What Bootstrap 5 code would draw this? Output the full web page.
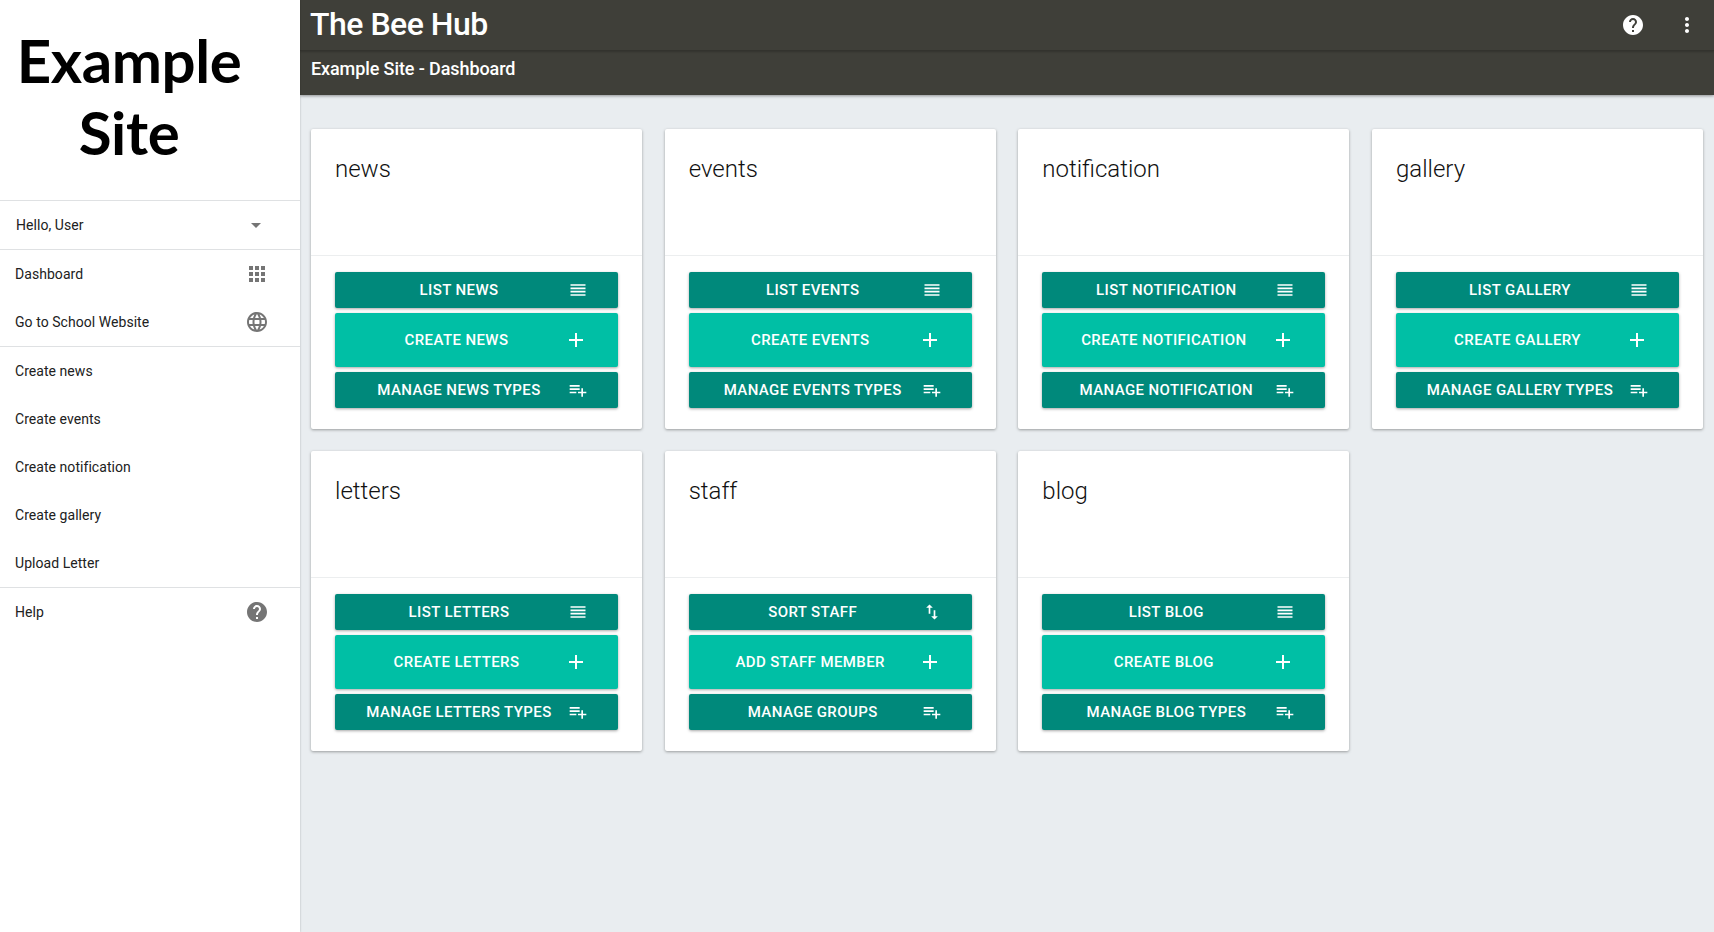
<!DOCTYPE html>
<html lang="en">
<head>
    <meta charset="UTF-8">
    <title>The Bee Hub</title>
    <link href="https://cdn.jsdelivr.net/npm/bootstrap@5.3.0/dist/css/bootstrap.min.css" rel="stylesheet">
    <style>
        body { background: #e9edf0; font-family: Roboto, sans-serif; color: #212121; overflow: hidden; }
        svg { fill: currentColor; display: block; }
        .side-panel { width: 300px; flex: none; height: 932px; background: #fff; box-shadow: 0 0 2px rgba(0,0,0,.25); }
        .site-logo { height: 200px; font-family: Lato, sans-serif; font-size: 60px; line-height: 72px; font-weight: 700; color: #000; text-align: center; padding: 24px 42px 0 0; letter-spacing: -.4px; }
        .side-group { border-top: 1px solid #dfe1e3; }
        .side-item { height: 48px; padding: 0 31px 0 15px; font-size: 14px; letter-spacing: .05px; color: #212121; text-decoration: none; }
        .side-hello { padding-left: 16px; }
        .side-item svg { color: #757575; width: 24px; height: 24px; }
        .caret-down { width: 0; height: 0; border-left: 5px solid transparent; border-right: 5px solid transparent; border-top: 5px solid #757575; margin-right: 8px; }
        .top-bar { background: #3f3f39; color: #fff; box-shadow: 0 1px 3px rgba(0,0,0,.4); height: 95px; }
        .top-row { height: 51px; padding: 0 15px 0 10px; border-bottom: 1px solid #33332e; box-shadow: 0 1px 2px rgba(0,0,0,.2); }
        .hub-title { font-size: 32px; line-height: 1; margin: -2px 0 0; font-weight: 500; letter-spacing: -.5px; }
        .sub-title { font-size: 18px; font-weight: 500; line-height: 24px; padding: 6px 11px; letter-spacing: -.1px; }
        .top-icons { gap: 30px; }
        .dash-grid { display: grid; grid-template-columns: repeat(4, 1fr); gap: 22px 22.67px; padding: 34px 11px 0; }
        .dash-card { border: 0; border-radius: 2px; height: 300px; box-shadow: 0 1px 3px rgba(0,0,0,.35); }
        .dash-head { height: 127px; padding: 24px; border-bottom: 1px solid #eceeef; font-size: 24px; line-height: 32px; font-weight: 300; color: #111; }
        .dash-actions { padding: 16px 24px 0; gap: 5px; }
        .act-btn { height: 36px; padding: 0; border: 0; border-radius: 2px; color: #fff; background: #00897b; font-size: 15px; font-weight: 500; letter-spacing: .4px; text-transform: uppercase; box-shadow: 0 1px 3px rgba(0,0,0,.35); }
        .act-btn:hover { color: #fff; background: #00897b; }
        .act-label { flex: 1; padding-left: 15px; text-align: center; }
        .act-btn svg { width: 20px; height: 20px; margin-right: 30px; flex: none; }
        .act-main { height: 54px; background: #00bfa5; }
        .act-main:hover { background: #00bfa5; }
        .act-main .act-label { padding-left: 14px; }
        .act-main svg { width: 24px; height: 24px; }
    </style>
</head>
<body>
    <svg width="0" height="0" class="position-absolute">
        <symbol id="i-help" viewBox="0 0 24 24"><path d="M12 2C6.48 2 2 6.48 2 12s4.48 10 10 10 10-4.48 10-10S17.52 2 12 2zm1 17h-2v-2h2v2zm2.07-7.75l-.9.92C13.45 12.9 13 13.5 13 15h-2v-.5c0-1.1.45-2.1 1.17-2.83l1.24-1.26c.37-.36.59-.86.59-1.41 0-1.1-.9-2-2-2s-2 .9-2 2H8c0-2.21 1.79-4 4-4s4 1.79 4 4c0 .88-.36 1.68-.93 2.25z"/></symbol>
        <symbol id="i-more" viewBox="0 0 24 24"><path d="M12 8c1.1 0 2-.9 2-2s-.9-2-2-2-2 .9-2 2 .9 2 2 2zm0 2c-1.1 0-2 .9-2 2s.9 2 2 2 2-.9 2-2-.9-2-2-2zm0 6c-1.1 0-2 .9-2 2s.9 2 2 2 2-.9 2-2-.9-2-2-2z"/></symbol>
        <symbol id="i-apps" viewBox="0 0 24 24"><path d="M4 8h4V4H4v4zm6 12h4v-4h-4v4zm-6 0h4v-4H4v4zm0-6h4v-4H4v4zm6 0h4v-4h-4v4zm6-10v4h4V4h-4zm-6 4h4V4h-4v4zm6 6h4v-4h-4v4zm0 6h4v-4h-4v4z"/></symbol>
        <symbol id="i-globe" viewBox="0 0 24 24"><path d="M11.99 2C6.47 2 2 6.48 2 12s4.47 10 9.99 10C17.52 22 22 17.52 22 12S17.52 2 11.99 2zm6.93 6h-2.95c-.32-1.25-.78-2.45-1.38-3.56 1.84.63 3.37 1.91 4.33 3.56zM12 4.04c.83 1.2 1.48 2.53 1.91 3.96h-3.82c.43-1.43 1.08-2.76 1.91-3.96zM4.26 14C4.1 13.36 4 12.69 4 12s.1-1.36.26-2h3.38c-.08.66-.14 1.32-.14 2 0 .68.06 1.34.14 2H4.26zm.82 2h2.95c.32 1.25.78 2.45 1.38 3.56-1.84-.63-3.37-1.9-4.33-3.56zm2.95-8H5.08c.96-1.66 2.49-2.93 4.33-3.56C8.81 5.55 8.35 6.75 8.03 8zM12 19.96c-.83-1.2-1.48-2.53-1.91-3.96h3.82c-.43 1.43-1.08 2.76-1.91 3.96zM14.34 14H9.66c-.09-.66-.16-1.32-.16-2 0-.68.07-1.35.16-2h4.68c.09.65.16 1.32.16 2 0 .68-.07 1.34-.16 2zm.25 5.56c.6-1.11 1.06-2.31 1.38-3.56h2.95c-.96 1.65-2.49 2.93-4.33 3.56zM16.36 14c.08-.66.14-1.32.14-2 0-.68-.06-1.34-.14-2h3.38c.16.64.26 1.31.26 2s-.1 1.36-.26 2h-3.38z"/></symbol>
        <symbol id="i-list" viewBox="0 0 24 24"><path d="M3 15h18v-2H3v2zm0 4h18v-2H3v2zm0-8h18V9H3v2zm0-6v2h18V5H3z"/></symbol>
        <symbol id="i-add" viewBox="0 0 24 24"><path d="M19 13h-6v6h-2v-6H5v-2h6V5h2v6h6v2z"/></symbol>
        <symbol id="i-types" viewBox="0 0 24 24"><path d="M14 10H2v2h12v-2zm0-4H2v2h12V6zm4 8v-4h-2v4h-4v2h4v4h2v-4h4v-2h-4zM2 16h8v-2H2v2z"/></symbol>
        <symbol id="i-sort" viewBox="0 0 24 24"><path d="M16 17.01V10h-2v7.01h-3L15 21l4-3.99h-3zM9 3L5 6.99h3V14h2V6.99h3L9 3z"/></symbol>
    </svg>

    <div class="d-flex">
        <!-- Sidebar -->
        <nav class="side-panel position-relative">
            <div class="site-logo">Example<br>Site</div>
            <div class="side-group">
                <a href="#" class="side-item side-hello d-flex align-items-center justify-content-between">Hello, User<span class="caret-down"></span></a>
            </div>
            <div class="side-group">
                <a href="#" class="side-item d-flex align-items-center justify-content-between">Dashboard<svg><use href="#i-apps"/></svg></a>
                <a href="#" class="side-item d-flex align-items-center justify-content-between">Go to School Website<svg><use href="#i-globe"/></svg></a>
            </div>
            <div class="side-group">
                <a href="#" class="side-item d-flex align-items-center">Create news</a>
                <a href="#" class="side-item d-flex align-items-center">Create events</a>
                <a href="#" class="side-item d-flex align-items-center">Create notification</a>
                <a href="#" class="side-item d-flex align-items-center">Create gallery</a>
                <a href="#" class="side-item d-flex align-items-center">Upload Letter</a>
            </div>
            <div class="side-group">
                <a href="#" class="side-item d-flex align-items-center justify-content-between">Help<svg><use href="#i-help"/></svg></a>
            </div>
        </nav>

        <div class="flex-grow-1">
            <!-- Header -->
            <header class="top-bar">
                <div class="top-row d-flex align-items-center justify-content-between">
                    <h1 class="hub-title">The Bee Hub</h1>
                    <div class="d-flex align-items-center top-icons">
                        <svg width="24" height="24"><use href="#i-help"/></svg>
                        <svg width="24" height="24"><use href="#i-more"/></svg>
                    </div>
                </div>
                <div class="sub-title">Example Site - Dashboard</div>
            </header>

            <main class="dash-grid" id="dashGrid"></main>
        </div>
    </div>

    <script>
        const sections = [
            { name: 'news' },
            { name: 'events' },
            { name: 'notification', manage: 'Manage notification' },
            { name: 'gallery' },
            { name: 'letters' },
            { name: 'staff', list: 'Sort staff', listIcon: 'i-sort', create: 'Add staff member', manage: 'Manage groups' },
            { name: 'blog' }
        ];

        let gridContent = '';
        sections.forEach(s => {
            gridContent += `<div class="card dash-card">
                <div class="dash-head">${s.name}</div>
                <div class="dash-actions d-flex flex-column">
                    <a href="#" class="btn act-btn d-flex align-items-center"><span class="act-label">${s.list || 'List ' + s.name}</span><svg><use href="#${s.listIcon || 'i-list'}"/></svg></a>
                    <a href="#" class="btn act-btn act-main d-flex align-items-center"><span class="act-label">${s.create || 'Create ' + s.name}</span><svg><use href="#i-add"/></svg></a>
                    <a href="#" class="btn act-btn d-flex align-items-center"><span class="act-label">${s.manage || 'Manage ' + s.name + ' types'}</span><svg><use href="#i-types"/></svg></a>
                </div>
            </div>`;
        });
        document.getElementById('dashGrid').innerHTML = gridContent;
    </script>
    <script src="https://cdn.jsdelivr.net/npm/bootstrap@5.3.0/dist/js/bootstrap.bundle.min.js"></script>
</body>
</html>
